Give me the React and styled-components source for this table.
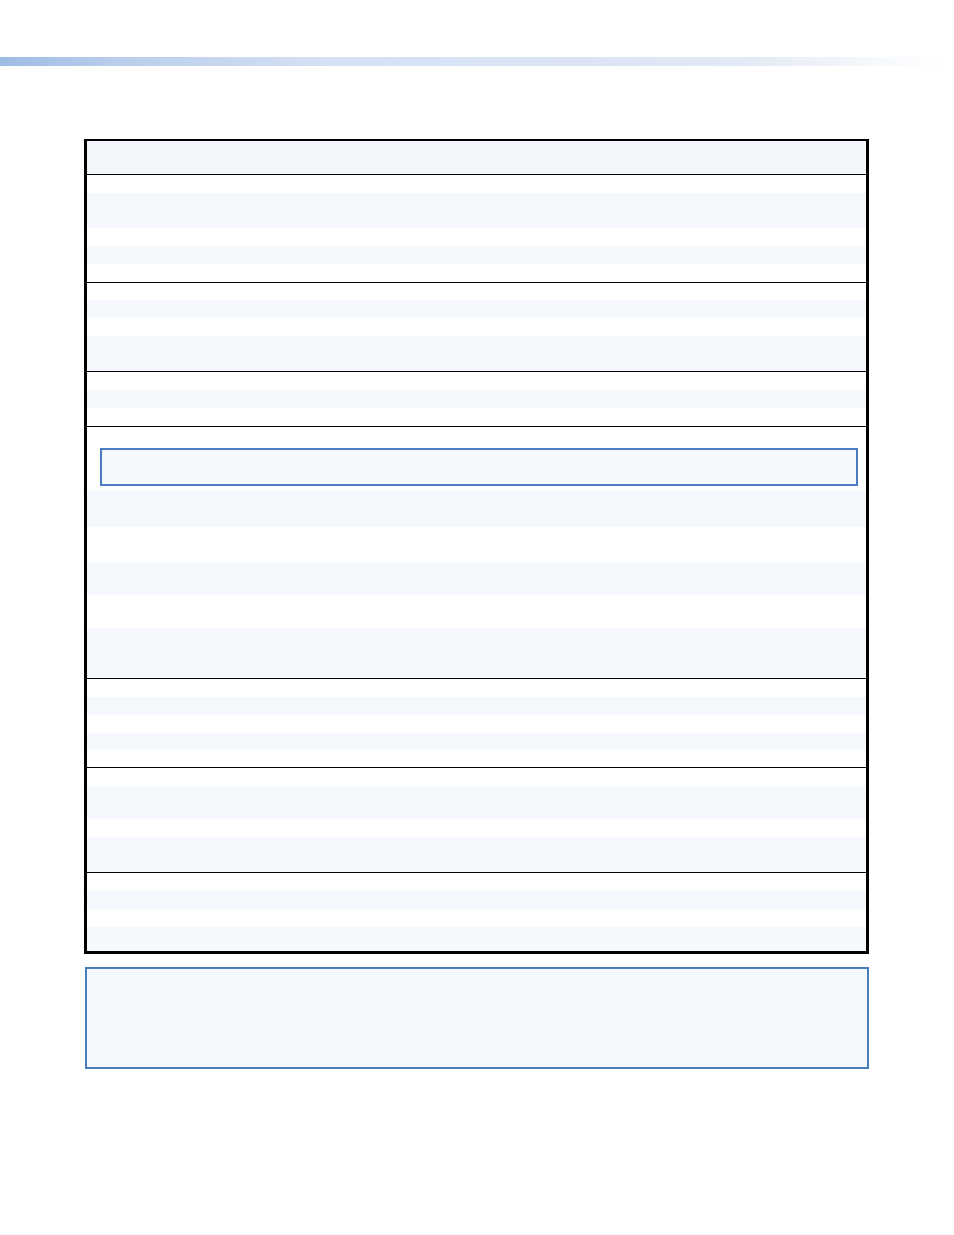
import React from "react";
import styled, { createGlobalStyle } from "styled-components";

const GlobalStyle = createGlobalStyle`
  html, body {
    margin: 0;
    padding: 0;
    background: #ffffff;
    font-family: "Liberation Sans", Arial, sans-serif;
  }
  *, *::before, *::after {
    box-sizing: border-box;
  }
`;

const Page = styled.div`
  width: 954px;
  min-height: 1235px;
  padding-top: 57px;
  background: #ffffff;
`;

const HeaderBar = styled.div`
  height: 9px;
  width: 100%;
  background: linear-gradient(
    to right,
    #9dbce4 0%,
    #b9cdec 12%,
    #d6e1f4 35%,
    #dae4f5 60%,
    #e3eaf5 78%,
    #f6f9fd 92%,
    #ffffff 99%
  );
`;

const Table = styled.div`
  margin: 73px 0 0 84px;
  width: 785px;
  border: 3px solid #000000;
  border-top-width: 2px;
  display: flex;
  flex-direction: column;
`;

const TableHead = styled.div`
  height: 33px;
  background: #f3f7fc;
`;

const Section = styled.div`
  border-top: 1px solid #000000;
  display: flex;
  flex-direction: column;
`;

const Row = styled.div`
  height: ${props => props.$h}px;
  background: ${props => (props.$shaded ? "#f5f9fd" : "#ffffff")};
`;

const CalloutRow = styled.div`
  padding: 21px 8px 5px 13px;
  background: #ffffff;
`;

const Callout = styled.div`
  height: 38px;
  border: 2px solid #4a7dbf;
  background: #f5f9fd;
`;

const Note = styled.div`
  margin: 13px 0 0 85px;
  width: 784px;
  height: 102px;
  border: 2px solid #4a7dbf;
  background: #f5f9fd;
`;

const sections = [
  [[18, 0], [35, 1], [18, 0], [18, 1], [18, 0]],
  [[17, 0], [18, 1], [18, 0], [35, 1]],
  [[18, 0], [18, 1], [18, 0]],
  ["callout", [36, 1], [35, 0], [33, 1], [33, 0], [50, 1]],
  [[18, 0], [18, 1], [18, 0], [17, 1], [17, 0]],
  [[18, 0], [33, 1], [18, 0], [35, 1]],
  [[18, 0], [18, 1], [18, 0], [24, 1]]
];

const App = () => (
  <Page>
    <GlobalStyle />
    <HeaderBar />
    <Table>
      <TableHead />
      {sections.map((rows, i) => (
        <Section key={i}>
          {rows.map((row, j) =>
            row === "callout" ? (
              <CalloutRow key={j}>
                <Callout />
              </CalloutRow>
            ) : (
              <Row key={j} $h={row[0]} $shaded={row[1] === 1} />
            )
          )}
        </Section>
      ))}
    </Table>
    <Note />
  </Page>
);

export default App;
